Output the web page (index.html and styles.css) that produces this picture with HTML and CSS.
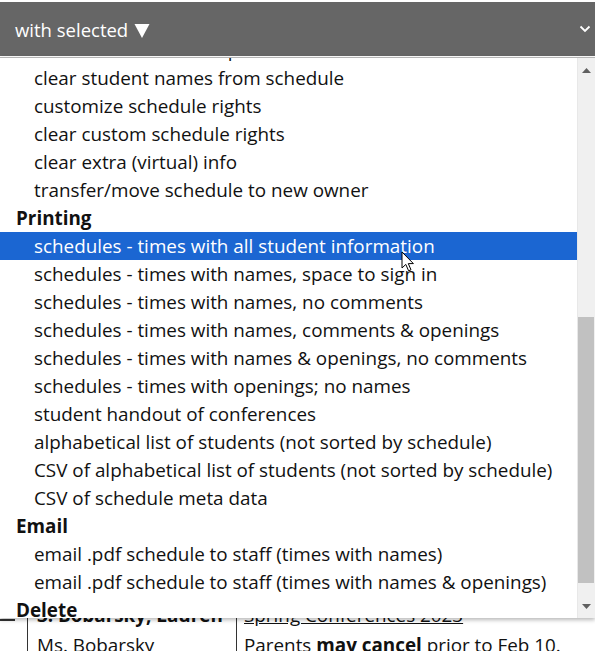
FILE: index.html
```html
<!DOCTYPE html>
<html>
<head>
<meta charset="utf-8">
<link rel="stylesheet" href="styles.css">
</head>
<body>
<div class="toolbar">
  <span class="toolbar-label">with selected <svg class="tri" width="16" height="15" viewBox="0 0 16 15"><path d="M0.5 1 L15.5 1 L8 15 Z" fill="#fff"/></svg></span>
  <svg class="chevron" width="12" height="8" viewBox="0 0 12 8"><path d="M1.5 1.5 L6 6 L10.5 1.5" fill="none" stroke="#fff" stroke-width="1.8"/></svg>
</div>

<div class="content">
  <div class="row">
    <div class="cell mark"><span class="dash"></span></div>
    <div class="cell c1"><b>3. Bobarsky, Lauren</b></div>
    <div class="cell c2"><u>Spring Conferences 2023</u></div>
  </div>
  <div class="row">
    <div class="cell mark"></div>
    <div class="cell c1">Ms. Bobarsky</div>
    <div class="cell c2">Parents <b>may cancel</b> prior to Feb 10.</div>
  </div>
</div>

<div class="dropdown">
  <div class="list">
    <div class="list-inner">
      <div class="opt">clear all conference reports</div>
      <div class="opt">clear student names from schedule</div>
      <div class="opt">customize schedule rights</div>
      <div class="opt">clear custom schedule rights</div>
      <div class="opt">clear extra (virtual) info</div>
      <div class="opt">transfer/move schedule to new owner</div>
      <div class="group">Printing</div>
      <div class="opt selected">schedules - times with all student information</div>
      <div class="opt">schedules - times with names, space to sign in</div>
      <div class="opt">schedules - times with names, no comments</div>
      <div class="opt">schedules - times with names, comments &amp; openings</div>
      <div class="opt">schedules - times with names &amp; openings, no comments</div>
      <div class="opt">schedules - times with openings; no names</div>
      <div class="opt">student handout of conferences</div>
      <div class="opt">alphabetical list of students (not sorted by schedule)</div>
      <div class="opt">CSV of alphabetical list of students (not sorted by schedule)</div>
      <div class="opt">CSV of schedule meta data</div>
      <div class="group">Email</div>
      <div class="opt">email .pdf schedule to staff (times with names)</div>
      <div class="opt">email .pdf schedule to staff (times with names &amp; openings)</div>
      <div class="group">Delete</div>
      <div class="opt">delete selected schedules</div>
    </div>
  </div>
  <div class="scrollbar">
    <div class="sb-arrow">
      <svg width="9" height="5" viewBox="0 0 9 5"><path d="M0 5 L4.5 0 L9 5 Z" fill="#606060"/></svg>
    </div>
    <div class="sb-track">
      <div class="sb-space"></div>
      <div class="sb-thumb"></div>
      <div class="sb-rest"></div>
    </div>
    <div class="sb-arrow">
      <svg width="9" height="5" viewBox="0 0 9 5"><path d="M0 0 L4.5 5 L9 0 Z" fill="#606060"/></svg>
    </div>
  </div>
</div>

<svg class="cursor" width="14" height="22" viewBox="0 0 14 22">
  <path d="M1 1 L1 17 L4.8 13.4 L7.6 19.8 L10 18.8 L7.3 12.6 L12.4 12.6 Z" fill="#fff" stroke="#000" stroke-width="1" stroke-linejoin="miter"/>
</svg>
</body>
</html>
```

FILE: styles.css
```css
html, body {
  margin: 0;
  padding: 0;
}
body {
  width: 595px;
  height: 651px;
  overflow: hidden;
  position: relative;
  background: #fff;
  font-family: "Open Sans", "Noto Sans", sans-serif;
  font-size: 18.85px;
  color: #111;
}
.toolbar {
  margin-top: 2px;
  height: 54px;
  background: #666666;
  display: flex;
  align-items: center;
  justify-content: space-between;
  padding: 0 4px 0 15px;
}
.toolbar-label {
  color: #fff;
  font-size: 18.5px;
  display: flex;
  align-items: center;
  gap: 6px;
  padding-top: 1px;
}
.tri {
  margin-top: 1px;
}
.content {
  margin-top: 544px;
}
.row {
  display: flex;
  height: 30px;
  line-height: 30px;
}
.cell {
  white-space: nowrap;
  overflow: hidden;
}
.mark {
  width: 27px;
  position: relative;
}
.dash {
  display: block;
  margin-top: 19px;
  width: 15px;
  height: 2px;
  background: #333;
}
.c1 {
  width: 199px;
  border-left: 1px solid #333;
  padding-left: 9px;
}
.c2 {
  flex: 1;
  border-left: 1px solid #333;
  padding-left: 7px;
}
.dropdown {
  position: absolute;
  left: 0;
  top: 57px;
  width: 595px;
  height: 561px;
  box-sizing: border-box;
  border-top: 1px solid #b5b5b5;
  background: #fff;
  box-shadow: 0 2px 4px rgba(0, 0, 0, 0.28);
  display: flex;
}
.list {
  flex: 1;
  overflow: hidden;
}
.list-inner {
  margin-top: -22px;
}
.opt, .group {
  height: 28px;
  line-height: 28px;
  white-space: nowrap;
}
.opt {
  padding-left: 34px;
}
.group {
  padding-left: 16px;
  font-weight: bold;
}
.opt.selected {
  background: #1b66d2;
  color: #fff;
}
.scrollbar {
  width: 17px;
  background: #f0f0f0;
  display: flex;
  flex-direction: column;
  border-left: 1px solid #e8e8e8;
}
.sb-arrow {
  height: 24px;
  display: flex;
  align-items: center;
  justify-content: center;
}
.sb-track {
  flex: 1;
  display: flex;
  flex-direction: column;
}
.sb-space {
  height: 235px;
}
.sb-thumb {
  height: 266px;
  background: #c1c1c1;
  margin: 0 1px 0 0;
}
.sb-rest {
  flex: 1;
}
.cursor {
  position: absolute;
  left: 401px;
  top: 251px;
}
```
